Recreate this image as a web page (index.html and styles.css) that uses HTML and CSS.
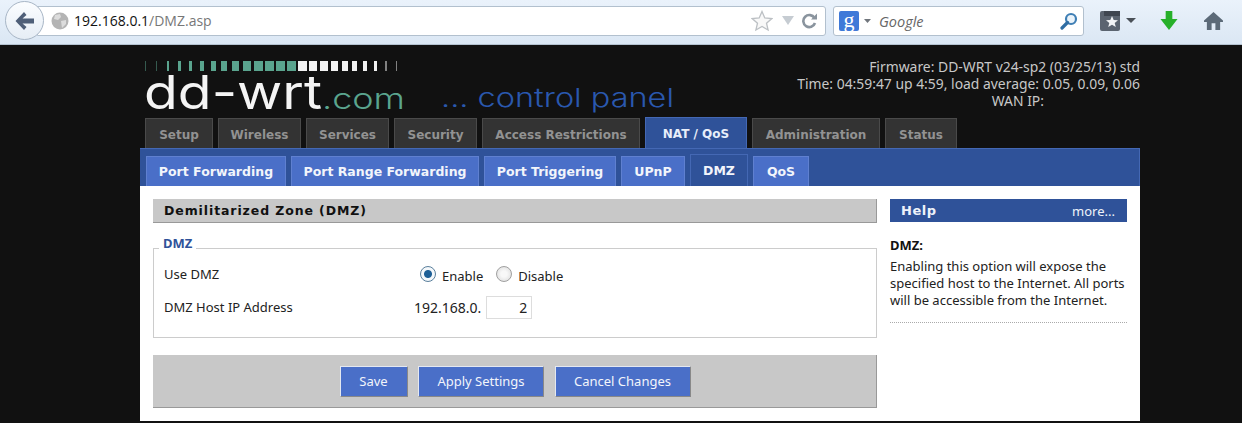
FILE: index.html
```html
<!DOCTYPE html>
<html lang="en">
<head>
  <meta charset="UTF-8" />
  <title>DD-WRT - DMZ</title>
  <link rel="stylesheet" href="styles.css">
</head>
<body>
  <!-- browser toolbar -->
  <div class="toolbar">
    <div class="back-btn">
      <svg width="22" height="20" viewBox="0 0 22 20"><path d="M10 1 L1.500 10 L10 19 L12.500 16 L8.500 12.500 H20 V7.500 H8.500 L12.500 4 Z" fill="#4f5f78"/></svg>
    </div>
    <div class="address">
      <svg class="globe" width="18" height="18" viewBox="0 0 18 18"><circle cx="9" cy="9" r="8.500" fill="#b4b4b4"/><path d="M4 3 L9 2 L10 5 L7 8 L3 7 Z M10 9 L15 8 L15 12 L11 16 Z" fill="#dcdcdc"/></svg>
      <span class="url"><b>192.168.0.1</b>/DMZ.asp</span>
      <svg class="star" width="22" height="22" viewBox="0 0 22 22"><path d="M11 1.500 L13.800 8 L20.800 8.600 L15.500 13.200 L17.100 20 L11 16.400 L4.900 20 L6.500 13.200 L1.200 8.600 L8.200 8 Z" fill="#f8f8f8" stroke="#bcc0c4" stroke-width="1.300"/></svg>
      <svg class="drop" width="12" height="9" viewBox="0 0 12 9"><path d="M0 0 H12 L6 9 Z" fill="#c6ccd2"/></svg>
      <svg class="reload" width="15" height="16" viewBox="0 0 15 16"><path d="M12.500 5 A6 6 0 1 0 13 10" fill="none" stroke="#8a949e" stroke-width="2.600"/><path d="M9 6.500 H15 V0.500 Z" fill="#8a949e"/></svg>
    </div>
    <div class="search">
      <span class="g-box">g</span>
      <svg width="7" height="4" viewBox="0 0 7 4"><path d="M0 0 H7 L3.500 4 Z" fill="#70757c"/></svg>
      <span class="search-text">Google</span>
      <svg class="lens" width="18" height="18" viewBox="0 0 18 18"><circle cx="11" cy="7" r="5" fill="#eaf3fa" stroke="#3f7fb5" stroke-width="2.200"/><path d="M7.500 10.500 L2 16" stroke="#2f6da3" stroke-width="3.200" stroke-linecap="round"/></svg>
    </div>
    <svg class="bookmarks" width="20" height="20" viewBox="0 0 20 20"><rect width="20" height="20" rx="2" fill="#5b6470"/><rect x="4" y="0" width="16" height="5" fill="#3f4650"/><path d="M12 5 L13.700 9 L18 9.300 L14.700 12 L15.800 16 L12 13.800 L8.200 16 L9.300 12 L6 9.300 L10.300 9 Z" fill="#f2f4f6"/></svg>
    <svg class="caret" width="10" height="5" viewBox="0 0 10 5"><path d="M0 0 H10 L5 5 Z" fill="#4a5058"/></svg>
    <svg class="down" width="18" height="19" viewBox="0 0 18 20"><path d="M5.500 0 H12.500 V8.500 H18 L9 20 L0 8.500 H5.500 Z" fill="#27b02a"/></svg>
    <svg class="home" width="19" height="18" viewBox="0 0 20 19"><path d="M10 0 L20 9 V10.500 H17 V19 H12 V12 H8 V19 H3 V10.500 H0 V9 Z" fill="#5c6a78"/></svg>
  </div>

  <div class="wrapper">
    <div class="header">
      <svg class="logo" width="540" height="73" viewBox="0 0 540 73">
        <g id="logo-bars"></g>
        <text class="logo-main" x="4" y="64" textLength="178" lengthAdjust="spacingAndGlyphs">dd-wrt</text>
        <text class="logo-com" x="182" y="64" textLength="83" lengthAdjust="spacingAndGlyphs">.com</text>
        <text class="logo-panel" x="301" y="62" textLength="233" lengthAdjust="spacingAndGlyphs">... control panel</text>
      </svg>
      <div class="info">
        <div>Firmware: DD-WRT v24-sp2 (03/25/13) std</div>
        <div>Time: 04:59:47 up 4:59, load average: 0.05, 0.09, 0.06</div>
        <div class="wan">WAN IP:</div>
      </div>
    </div>

    <ul class="tabs">
      <li style="width:68px">Setup</li>
      <li style="width:83px">Wireless</li>
      <li style="width:83px">Services</li>
      <li style="width:83px">Security</li>
      <li style="width:158px">Access Restrictions</li>
      <li class="active" style="width:102px">NAT / QoS</li>
      <li style="width:128px">Administration</li>
      <li style="width:72px">Status</li>
    </ul>

    <ul class="subtabs">
      <li style="width:140px">Port Forwarding</li>
      <li style="width:188px">Port Range Forwarding</li>
      <li style="width:132px">Port Triggering</li>
      <li style="width:64px">UPnP</li>
      <li class="active" style="width:58px">DMZ</li>
      <li style="width:56px">QoS</li>
    </ul>

    <div class="content">
      <div class="main">
        <h2>Demilitarized Zone (DMZ)</h2>
        <fieldset>
          <legend>DMZ</legend>
          <div class="row">
            <label>Use DMZ</label>
            <div class="radios">
              <input type="radio" name="dmz" checked><span>Enable</span>
              <input type="radio" name="dmz"><span>Disable</span>
            </div>
          </div>
          <div class="row ip-row">
            <label>DMZ Host IP Address</label>
            <div class="ip">192.168.0.<input type="text" value="2"></div>
          </div>
        </fieldset>
        <div class="buttons">
          <button style="width:68px">Save</button>
          <button style="width:126px">Apply Settings</button>
          <button style="width:136px">Cancel Changes</button>
        </div>
      </div>
      <div class="help">
        <div class="help-head"><b>Help</b><span>more...</span></div>
        <h3>DMZ:</h3>
        <p>Enabling this option will expose the specified host to the Internet. All ports will be accessible from the Internet.</p>
      </div>
    </div>
  </div>

  <script>
    // logo level bars, green then white
    const bars = document.getElementById('logo-bars');
    const widths = [1,1,2,3,3,4,5,6,7,8,9,9,9,9,9,8,8,7,6,5,4,3,2,1];
    widths.forEach((w, i) => {
      const r = document.createElementNS('http://www.w3.org/2000/svg', 'rect');
      r.setAttribute('x', Math.round(5 + i * 10.92));
      r.setAttribute('y', 16);
      r.setAttribute('width', w);
      r.setAttribute('height', 10);
      r.setAttribute('fill', i < 14 ? '#5aa48e' : '#f2f2f2');
      if (i < 2 || i > 21) r.setAttribute('opacity', '0.5');
      bars.appendChild(r);
    });
  </script>
</body>
</html>
```

FILE: styles.css
```css
body {
  margin: 0;
  background-color: #111;
  font-family: "Noto Sans", Arial, sans-serif;
  font-size: 13px;
  color: #222;
  overflow: hidden;
}
ul {
  list-style: none;
  margin: 0;
  padding: 0;
}

/* browser toolbar */
.toolbar {
  height: 45px;
  box-sizing: border-box;
  border-bottom: 1px solid #b4c2d0;
  background: linear-gradient(#eaf2fb, #dbe7f4);
  display: flex;
  align-items: center;
  padding-left: 5px;
  padding-bottom: 3px;
}
.back-btn {
  width: 39px;
  height: 39px;
  box-sizing: border-box;
  border: 1px solid #a8b6c6;
  border-radius: 50%;
  background: linear-gradient(#fbfdff, #e6edf5);
  display: flex;
  align-items: center;
  justify-content: center;
  flex-shrink: 0;
  z-index: 1;
}
.address, .search {
  height: 30px;
  box-sizing: border-box;
  background: white;
  border: 1px solid #b2c0ce;
  display: flex;
  align-items: center;
}
.address {
  width: 789px;
  margin-left: -7px;
  border-radius: 0 3px 3px 0;
  padding-left: 13px;
  padding-right: 8px;
}
.globe {
  margin-right: 5px;
}
.url {
  font-family: "Open Sans", Arial, sans-serif;
  font-size: 14px;
  color: #777;
  flex: 1;
}
.url b {
  font-weight: normal;
  color: #111;
}
.star {
  margin-right: 2px;
}
.drop {
  margin-left: 7px;
  margin-right: 8px;
}
.search {
  width: 251px;
  margin-left: 7px;
  border-radius: 3px;
  padding-left: 5px;
  padding-right: 5px;
}
.g-box {
  width: 20px;
  height: 20px;
  background: #3f79d8;
  color: white;
  font-family: "Liberation Serif", serif;
  font-size: 22px;
  line-height: 17px;
  text-align: center;
  border-radius: 2px;
  margin-right: 5px;
}
.search-text {
  flex: 1;
  margin-left: 8px;
  padding-top: 2px;
  font-family: "Open Sans", Arial, sans-serif;
  font-style: italic;
  font-size: 14.500px;
  color: #666;
}
.bookmarks {
  margin-left: 16px;
}
.caret {
  margin-left: 6px;
}
.down {
  margin-left: 24px;
}
.home {
  margin-left: 26px;
}

/* page */
.wrapper {
  width: 1000px;
  margin-left: 140px;
}
.header {
  height: 73px;
  display: flex;
  justify-content: space-between;
}
.logo {
  display: block;
  overflow: visible;
}
.logo text {
  font-family: Inter, "DejaVu Sans", sans-serif;
}
.logo-main {
  font-size: 47px;
  font-weight: 400;
  fill: #f4f4f4;
}
.logo-com {
  font-size: 29px;
  font-weight: 300;
  fill: #5aa48e;
}
.logo-panel {
  font-size: 26px;
  font-weight: 300;
  fill: #2a58ae;
}
.info {
  text-align: right;
  color: #c8c8c8;
  font-size: 13.900px;
  line-height: 17px;
  padding-top: 13px;
}
.wan {
  padding-right: 96px;
}

.tabs {
  display: flex;
  align-items: flex-end;
  gap: 5px;
  height: 30px;
  padding-left: 5px;
}
.tabs li {
  height: 30px;
  box-sizing: border-box;
  background: #333;
  border: 1px solid #4a4a4a;
  border-bottom: none;
  color: #929292;
  font-family: "DejaVu Sans", sans-serif;
  font-size: 12px;
  font-weight: bold;
  line-height: 32px;
  text-align: center;
}
.tabs li.active {
  height: 31px;
  background: #2f5299;
  border-color: #4468b4;
  color: #e8eefa;
}

.subtabs {
  height: 38px;
  box-sizing: border-box;
  background: #2f5299;
  border-top: 1px solid #4468b4;
  border-right: 1px solid #4468b4;
  padding-left: 6px;
  display: flex;
  align-items: flex-end;
  gap: 5px;
}
.subtabs li {
  height: 30px;
  box-sizing: border-box;
  background: #4a6fc8;
  border: 1px solid #5f80d0;
  border-bottom: none;
  color: #f2f5fb;
  font-family: "DejaVu Sans", sans-serif;
  font-size: 12.500px;
  font-weight: bold;
  line-height: 30px;
  text-align: center;
}
.subtabs li.active {
  height: 32px;
  background: #2f5299;
  border-color: #4468b4;
  line-height: 32px;
}

.content {
  background: white;
  height: 235px;
  display: flex;
  padding: 13px 13px 0;
  box-sizing: border-box;
  gap: 13px;
}
.main {
  width: 724px;
}
h2 {
  margin: 0;
  height: 24px;
  box-sizing: border-box;
  background: #c8c8c8;
  border-bottom: 1px solid #999;
  border-right: 1px solid #999;
  padding-left: 11px;
  font-family: "DejaVu Sans", sans-serif;
  font-size: 12.500px;
  letter-spacing: 0.900px;
  line-height: 24px;
  color: #111;
}
fieldset {
  margin: 13px 0 0;
  padding: 0;
  height: 102px;
  box-sizing: border-box;
  border: 1px solid #ccc;
}
legend {
  margin-left: 5px;
  padding: 0 4px 10px;
  font-weight: bold;
  color: #2f5299;
  line-height: 14px;
}
.row {
  display: flex;
  align-items: center;
  height: 24px;
  margin-top: 2px;
  padding-left: 10px;
}
.row label {
  width: 250px;
}
.row.ip-row {
  margin-top: 9px;
}
.radios {
  display: flex;
  align-items: center;
  padding-left: 6px;
}
.radios input {
  appearance: none;
  width: 16px;
  height: 16px;
  margin: 0 6px 0 0;
  border-radius: 50%;
  border: 1px solid #a0a0a0;
  background: radial-gradient(circle, #f8f8f8 30%, #d8d8d8 100%);
}
.radios input:checked {
  background: radial-gradient(circle, #1d5f96 0 3.500px, #f4f8fb 4.500px);
  border-color: #5a7f9c;
}
.radios span {
  margin-right: 13px;
  position: relative;
  top: 2px;
}
.ip {
  display: flex;
  align-items: center;
  font-size: 14px;
}
.ip input {
  width: 46px;
  height: 23px;
  box-sizing: border-box;
  margin-left: 5px;
  border: 1px solid #ddd;
  padding: 0 4px;
  text-align: right;
  font: inherit;
  color: #222;
}
.buttons {
  margin-top: 17px;
  height: 53px;
  box-sizing: border-box;
  background: #c8c8c8;
  border-bottom: 1px solid #999;
  border-right: 1px solid #999;
  display: flex;
  justify-content: center;
  align-items: center;
  gap: 10.500px;
  padding-left: 1px;
}
button {
  height: 31px;
  background: #4a6fc8;
  border: 1px solid;
  border-color: #e4e8f0 #888 #888 #e4e8f0;
  color: #f2f5fb;
  font: inherit;
  padding: 0;
}

/* help column */
.help {
  width: 237px;
}
.help-head {
  height: 23px;
  background: #2f5299;
  color: #eef2fa;
  display: flex;
  justify-content: space-between;
  align-items: center;
  padding: 0 12px 0 11px;
}
.help-head b {
  font-family: "DejaVu Sans", sans-serif;
  font-size: 13px;
  letter-spacing: 0.5px;
}
h3 {
  margin: 15px 0 4px;
  font-size: 13px;
  line-height: 17px;
  color: #111;
}
.help p {
  margin: 0;
  padding-bottom: 13px;
  line-height: 17px;
  border-bottom: 1px dotted #aaa;
}
```
